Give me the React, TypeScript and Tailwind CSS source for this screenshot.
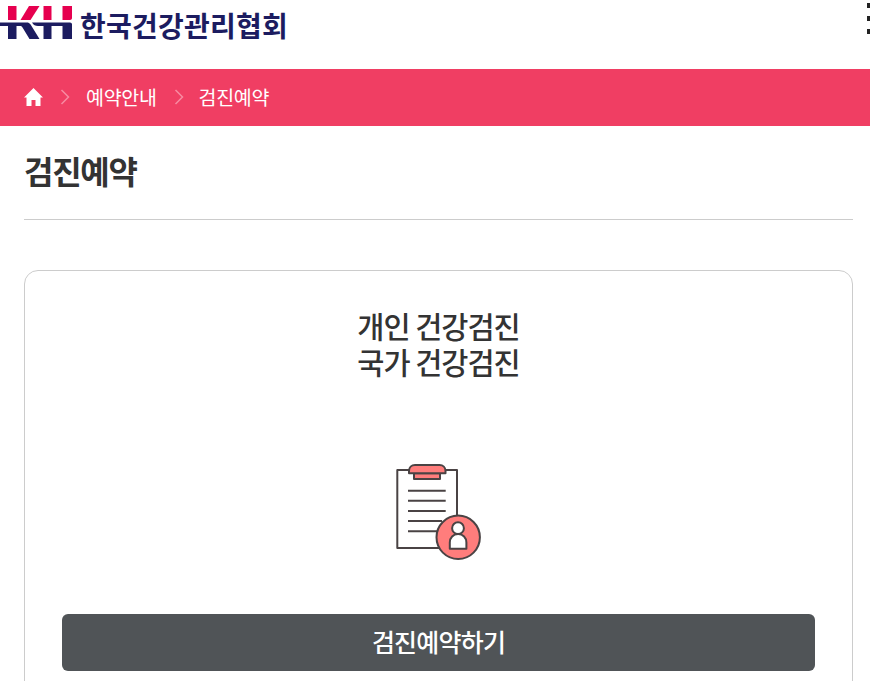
import React from 'react'

function Logo() {
  return (
    <a href="#" className="flex h-full items-start">
      <svg width="73" height="52" viewBox="0 0 73 52" aria-label="KH" className="shrink-0">
        <g fill="#e6004f">
          <path d="M8 6h8.500v14H8z" />
          <path d="M29 6h10.500L30.500 20h-10z" />
          <path d="M43.500 6h8v14h-8z" />
          <path d="M62.500 6H72v12c0 1.300-.8 2-2 2h-7.500z" />
        </g>
        <g fill="#1c1c60">
          <path d="M0 22.500h26.500c2 0 3.200.6 4.100 2.100L39.500 39h-10l-7-11.500c-.7-1.100-1.300-1.500-2.500-1.500h-3.500v13H8V26H0z" />
          <path d="M32 22.500h38c1.200 0 2 .8 2 2V39h-9.500V26h-11v13h-8V26H38c-2.800 0-4.300-.8-6-3.500z" />
        </g>
      </svg>
      <span className="ml-[7px] mt-[5px] text-[28px] leading-[40px] font-bold tracking-[0.250px] text-[#1c1c60] whitespace-nowrap">
        한국건강관리협회
      </span>
    </a>
  )
}

function Chevron() {
  return (
    <svg width="10" height="16" viewBox="0 0 10 16" fill="none" stroke="#f78ba1" strokeWidth="1.500" className="ml-[17px] mr-[16px] shrink-0">
      <path d="M1.500 1l7 7-7 7" />
    </svg>
  )
}

function ClipboardIcon() {
  return (
    <svg width="88" height="98" viewBox="0 0 88 98" fill="none" stroke="#4a4344" strokeWidth="2" strokeLinejoin="round">
      <path d="M4.300 8H64v78H4.300z" fill="#fff" />
      <path d="M21 11.300h26V17H21z" fill="#ff7d7c" />
      <path d="M16 11.300V9c0-3.500 2.500-6 6-6h24.500c3.500 0 6 2.500 6 6v2.300z" fill="#ff7d7c" />
      <path d="M15 28.700h37.700M15 38.800h37.700M15 48.900h37.700M15 59h34M15 69.200h30" />
      <circle cx="65.200" cy="75.300" r="21.700" fill="#ff7d7c" />
      <circle cx="65" cy="66.200" r="5.900" fill="#fff" />
      <path d="M56.800 86.800V80.500c0-5 3.400-8.400 8.300-8.400s8.300 3.400 8.300 8.400v6.300z" fill="#fff" />
    </svg>
  )
}

export default function App() {
  return (
    <div className="h-[681px] overflow-hidden bg-white text-[#333] font-['Noto_Sans_CJK_KR',sans-serif]">
      {/* Header */}
      <header className="flex h-[69px] items-start justify-between">
        <Logo />
        <button aria-label="menu" className="mt-[3px] flex w-[3px] flex-col gap-[8px]">
          <span className="h-[5px] w-full bg-[#222]" />
          <span className="h-[5px] w-full bg-[#222]" />
          <span className="h-[5px] w-full bg-[#222]" />
        </button>
      </header>

      {/* Breadcrumb */}
      <nav className="flex h-[57px] items-center bg-[#f03e63] pb-[2px] pl-6 text-[19.500px] leading-none tracking-[-0.300px] text-white">
        <svg width="19" height="18" viewBox="0 0 19 18" fill="#fff">
          <path d="M9.500 0L19 9.500h-2.500V18h-5v-6h-4v6h-5V9.500H0z" />
        </svg>
        <Chevron />
        <a href="#">예약안내</a>
        <Chevron />
        <a href="#" className="-ml-px">검진예약</a>
      </nav>

      <main className="pl-6 pr-[17px]">
        <h1 className="flex h-[94px] items-center border-b border-[#ccc] pb-[5px] text-[32px] font-bold leading-none tracking-[-1.300px]">
          검진예약
        </h1>

        {/* Reservation card */}
        <section className="mt-[50px] flex h-[450px] flex-col items-center rounded-[14px] border border-[#ccc] px-[37px] pt-[36px]">
          <h2 className="text-center text-[29.500px] font-medium leading-[36px] tracking-[-1px]">
            개인 건강검진
            <br />
            국가 건강검진
          </h2>
          <div className="mt-[83px] pr-[3px]">
            <ClipboardIcon />
          </div>
          <a
            href="#"
            className="mt-auto mb-[48px] flex h-[57px] w-full items-center justify-center rounded-[6px] bg-[#505457] pb-[2px] text-[25px] font-medium leading-none tracking-[-0.800px] text-white"
          >
            검진예약하기
          </a>
        </section>
      </main>
    </div>
  )
}
